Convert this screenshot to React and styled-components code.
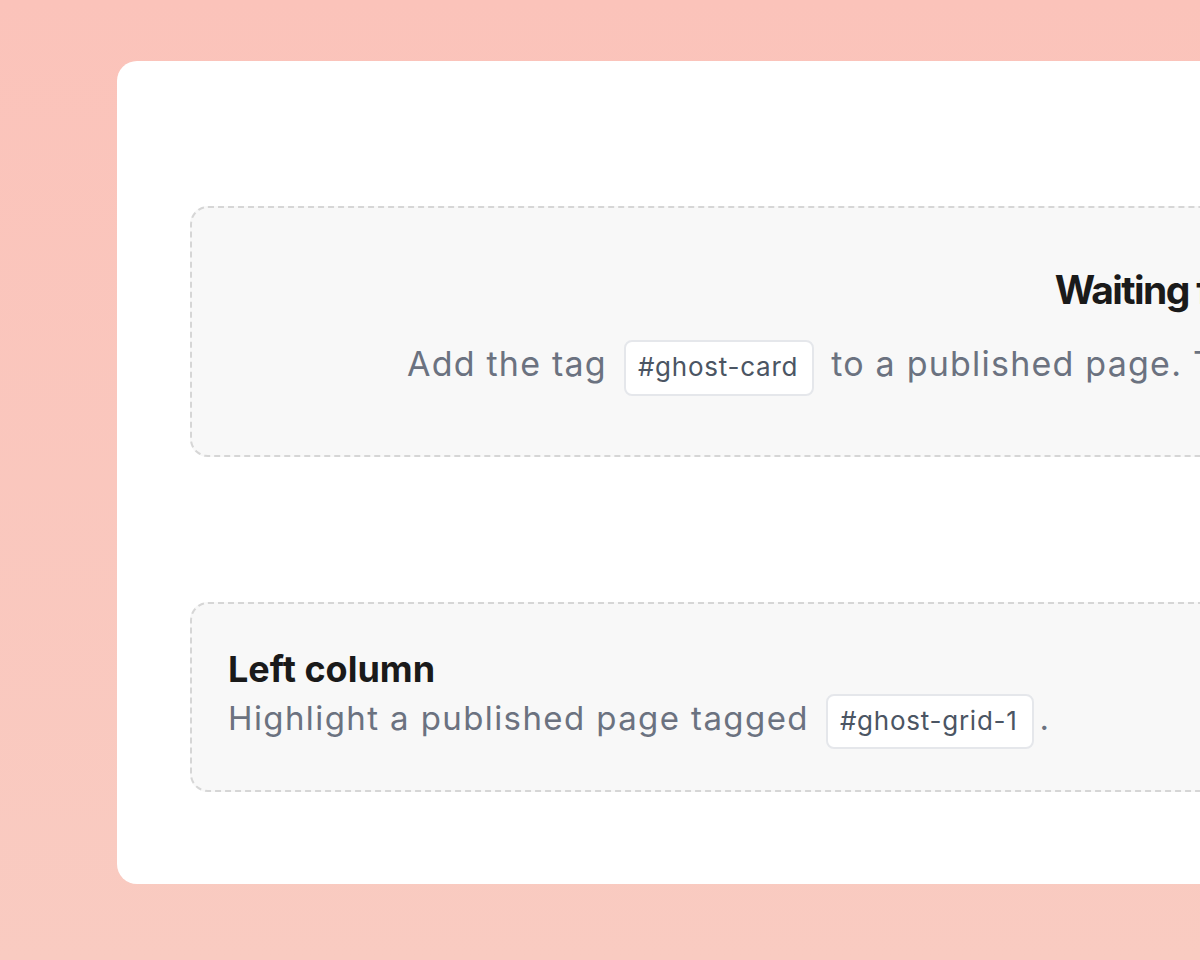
import React from "react";
import styled, { createGlobalStyle } from "styled-components";

const Global = createGlobalStyle`
  html, body {
    margin: 0;
    padding: 0;
    overflow: hidden;
    width: 1200px;
    height: 960px;
  }
  body {
    font-family: Inter, "Noto Sans", "Liberation Sans", sans-serif;
    background: linear-gradient(180deg, #fbc3ba 0%, #f9cbc1 100%);
    -webkit-font-smoothing: antialiased;
  }
`;

const Page = styled.div`
  width: 1200px;
  height: 960px;
  overflow: hidden;
  padding: 61px 0 0 117px;
  box-sizing: border-box;
`;

const Card = styled.main`
  width: 2210px;
  box-sizing: border-box;
  background: #ffffff;
  border-radius: 20px;
  padding: 145px 73px 92px;
  display: flex;
  flex-direction: column;
  gap: 145px;
`;

const Slot = styled.section`
  box-sizing: border-box;
  background: #f8f8f8;
  border: 2px dashed #d6d6d6;
  border-radius: 18px;
  display: flex;
  flex-direction: column;
  align-items: ${(p) => (p.$center ? "center" : "flex-start")};
  text-align: ${(p) => (p.$center ? "center" : "left")};
  padding: ${(p) => (p.$center ? "58px 36px 59px" : "43px 36px 41px")};
  gap: ${(p) => (p.$center ? "22px" : "0px")};
`;

const Title = styled.h2`
  margin: 0;
  font-weight: 700;
  color: #1a1a1a;
  font-size: ${(p) => p.$size}px;
  letter-spacing: ${(p) => p.$track}px;
  line-height: 1.25;
`;

const Text = styled.p`
  margin: 0;
  color: #6b7280;
  font-size: ${(p) => p.$size}px;
  letter-spacing: ${(p) => p.$track}px;
  line-height: 1.6;
  display: flex;
  align-items: baseline;
  flex-wrap: nowrap;
  white-space: nowrap;
  gap: 17px;
`;

const Tag = styled.code`
  font-family: Inter, "Noto Sans", "Liberation Sans", sans-serif;
  font-size: 26px;
  letter-spacing: 0.75px;
  color: #4b5563;
  background: #ffffff;
  border: 2px solid #e5e7eb;
  border-radius: 8px;
  padding: 8px 14px 10px 12px;
  line-height: 1.3;
`;

const Dot = styled.span`
  margin-left: -11px;
`;

export default function App() {
  return (
    <>
      <Global />
      <Page>
        <Card>
          <Slot $center>
            <Title $size={39} $track={-1.6}>Waiting for content</Title>
            <Text $size={34} $track={1.22}>
              <span>Add the tag</span>
              <Tag>#ghost-card</Tag>
              <span>to a published page. The featured card will appear here once it is live.</span>
            </Text>
          </Slot>
          <Slot>
            <Title $size={36} $track={0}>Left column</Title>
            <Text $size={33} $track={1.4}>
              <span>Highlight a published page tagged</span>
              <Tag>#ghost-grid-1</Tag>
              <Dot>.</Dot>
            </Text>
          </Slot>
        </Card>
      </Page>
    </>
  );
}
